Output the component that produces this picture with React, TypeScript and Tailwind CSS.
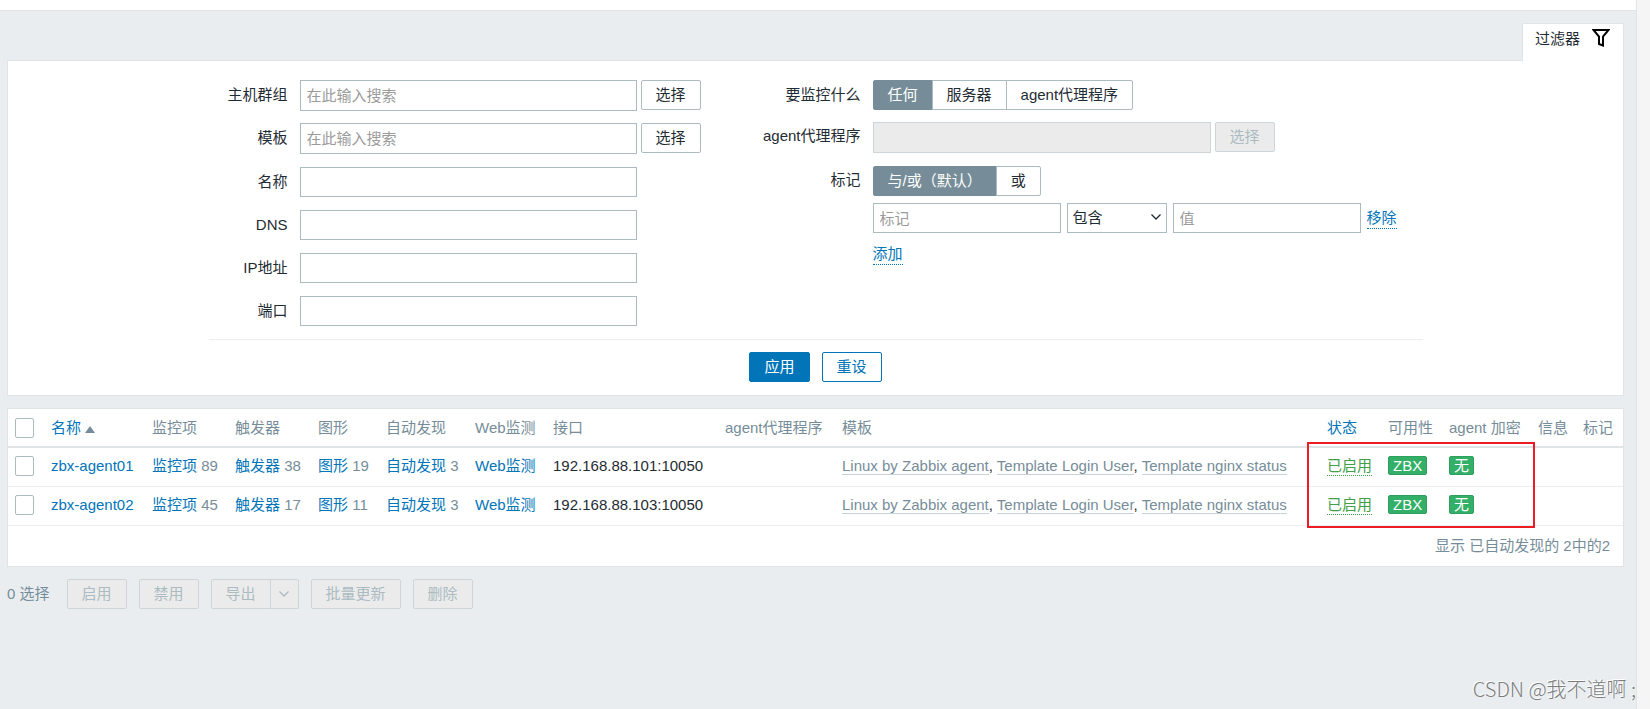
import React from "react";

interface Host {
  name: string;
  items: number;
  triggers: number;
  graphs: number;
  discovery: number;
  iface: string;
  templates: string[];
}

const templates = ["Linux by Zabbix agent", "Template Login User", "Template nginx status"];

const hosts: Host[] = [
  { name: "zbx-agent01", items: 89, triggers: 38, graphs: 19, discovery: 3, iface: "192.168.88.101:10050", templates },
  { name: "zbx-agent02", items: 45, triggers: 17, graphs: 11, discovery: 3, iface: "192.168.88.103:10050", templates },
];

const columns = [
  { label: "监控项", width: "w-[83px]" },
  { label: "触发器", width: "w-[83px]" },
  { label: "图形", width: "w-[68px]" },
  { label: "自动发现", width: "w-[89px]" },
  { label: "Web监测", width: "w-[78px]" },
  { label: "接口", width: "w-[172px]" },
  { label: "agent代理程序", width: "w-[117px]" },
  { label: "模板", width: "" },
  { label: "状态", width: "w-[61px]", link: true },
  { label: "可用性", width: "w-[61px]" },
  { label: "agent 加密", width: "w-[89px]" },
  { label: "信息", width: "w-[45px]" },
  { label: "标记", width: "w-10" },
];

const inputClass = "h-[30px] border border-[#acbbc2] bg-white px-1.5 placeholder:text-[#9b9b9b] outline-none";
const buttonClass = "h-[30px] shrink-0 rounded-xs border border-[#acbbc2] bg-white px-3.5 whitespace-nowrap";
const disabledClass = "h-[30px] shrink-0 rounded-xs border border-[#ccd5d9] bg-[#ebebeb] px-3.5 whitespace-nowrap text-[#acbbc2]";
const checkboxClass = "block h-5 w-[19px] appearance-none rounded-xs border border-[#acbbc2] bg-white";

function Chevron() {
  return (
    <svg width="10" height="6" viewBox="0 0 10 6" fill="none" stroke="currentColor" strokeWidth="1.3">
      <path d="M0.5 0.5L5 5L9.5 0.5" />
    </svg>
  );
}

function Segments({ name, options }: { name: string; options: string[] }) {
  return (
    <div className="flex">
      {options.map((option, idx) => (
        <label
          key={option}
          className="relative -ml-px flex h-[30px] items-center border border-[#acbbc2] bg-white px-3.5 whitespace-nowrap first:ml-0 first:rounded-l-xs last:rounded-r-xs has-checked:border-[#768d99] has-checked:bg-[#768d99] has-checked:text-white"
        >
          <input type="radio" name={name} defaultChecked={idx === 0} className="sr-only" />
          {option}
        </label>
      ))}
    </div>
  );
}

function Filter() {
  return (
    <form className="border border-[#dfe4e7] bg-white pt-[19px] pb-[13px]">
      <div className="mx-auto max-w-[1214px]">
        <div className="flex border-b border-[#ebeef0] pb-[13px]">
          {/* Host fields */}
          <div className="flex flex-col gap-3">
            {["主机群组", "模板"].map((label) => (
              <div key={label} className="flex h-[31px] items-start">
                <label htmlFor={label} className="mr-3 w-[79px] text-right leading-[30px]">
                  {label}
                </label>
                <input
                  id={label}
                  placeholder="在此输入搜索"
                  className="mr-1 h-[31px] w-[337px] border border-[#acbbc2] bg-white px-1.5 outline-none placeholder:text-[#9b9b9b]"
                />
                <button type="button" className={buttonClass}>选择</button>
              </div>
            ))}
            {["名称", "DNS", "IP地址", "端口"].map((label) => (
              <div key={label} className="flex h-[31px] items-end">
                <label htmlFor={label} className="mr-3 w-[79px] text-right leading-[30px]">
                  {label}
                </label>
                <input id={label} className={`${inputClass} w-[337px]`} />
              </div>
            ))}
          </div>

          {/* Monitoring source and tags */}
          <div className="flex flex-1 flex-col gap-3">
            <div className="flex">
              <span className="mr-3 w-40 text-right leading-[30px]">要监控什么</span>
              <Segments name="monitored" options={["任何", "服务器", "agent代理程序"]} />
            </div>
            <div className="flex h-8 items-start">
              <label htmlFor="proxy" className="mr-3 w-40 text-right leading-7">agent代理程序</label>
              <input id="proxy" disabled className="mr-1 h-[31px] w-[338px] border border-[#ccd5d9] bg-[#ebebeb]" />
              <button type="button" disabled className={disabledClass}>选择</button>
            </div>
            <div className="flex">
              <span className="mr-3 w-40 text-right leading-7">标记</span>
              <div>
                <Segments name="evaltype" options={["与/或（默认）", "或"]} />
                <div className="mt-[7px] flex items-center gap-1.5">
                  <input aria-label="标记" placeholder="标记" className={`${inputClass} w-[188px]`} />
                  <div className="relative">
                    <select aria-label="运算符" className="block h-[30px] w-[100px] appearance-none border border-[#acbbc2] bg-white px-[5px]">
                      <option>包含</option>
                    </select>
                    <span className="pointer-events-none absolute top-[11px] right-1.5">
                      <Chevron />
                    </span>
                  </div>
                  <input aria-label="值" placeholder="值" className={`${inputClass} w-[188px]`} />
                  <button type="button" className="border-b border-dotted border-[#0275b8] leading-5 text-[#0275b8]">移除</button>
                </div>
                <button type="button" className="mt-[11px] border-b border-dotted border-[#0275b8] leading-5 text-[#0275b8]">添加</button>
              </div>
            </div>
          </div>
        </div>
        <div className="flex justify-center gap-3 pt-3">
          <button type="button" className="h-[30px] rounded-xs border border-[#0275b8] bg-[#0275b8] px-3.5 text-white">应用</button>
          <button type="button" className="h-[30px] rounded-xs border border-[#0275b8] bg-white px-3.5 text-[#0275b8]">重设</button>
        </div>
      </div>
    </form>
  );
}

function CountLink({ label, count }: { label: string; count: number }) {
  return (
    <td className="pb-0.5 text-[#768d99]">
      <a href="#" className="text-[#0275b8]">{label}</a> {count}
    </td>
  );
}

function HostTable() {
  return (
    <section className="relative mt-3 border border-[#dfe4e7] bg-white">
      <table className="w-full table-fixed border-collapse whitespace-nowrap">
        <thead>
          <tr className="h-[38px] border-b-2 border-[#dfe4e7] text-left text-[#768d99]">
            <th className="w-[43px] pl-[7px]">
              <input type="checkbox" aria-label="全选" className={checkboxClass} />
            </th>
            <th className="w-[101px] font-normal">
              <a href="#" className="flex items-center gap-1 text-[#0275b8]">
                名称
                <svg width="10" height="7" viewBox="0 0 10 7" className="mt-1 fill-[#768d99]">
                  <path d="M5 0L10 7H0Z" />
                </svg>
              </a>
            </th>
            {columns.map((col) => (
              <th key={col.label} className={`${col.width} font-normal`}>
                {col.link ? <a href="#" className="text-[#0275b8]">{col.label}</a> : col.label}
              </th>
            ))}
          </tr>
        </thead>
        <tbody>
          {hosts.map((host) => (
            <tr key={host.name} className="h-[39px] border-b border-[#ebeef0]">
              <td className="pb-0.5 pl-[7px]">
                <input type="checkbox" aria-label={host.name} className={checkboxClass} />
              </td>
              <td className="pb-0.5"><a href="#" className="text-[#0275b8]">{host.name}</a></td>
              <CountLink label="监控项" count={host.items} />
              <CountLink label="触发器" count={host.triggers} />
              <CountLink label="图形" count={host.graphs} />
              <CountLink label="自动发现" count={host.discovery} />
              <td className="pb-0.5"><a href="#" className="text-[#0275b8]">Web监测</a></td>
              <td className="pb-0.5">{host.iface}</td>
              <td></td>
              <td className="pb-0.5">
                {host.templates.map((template, idx) => (
                  <React.Fragment key={template}>
                    {idx > 0 && ", "}
                    <a href="#" className="border-b border-[#c8d1d6] text-[#768d99]">{template}</a>
                  </React.Fragment>
                ))}
              </td>
              <td className="pb-0.5"><a href="#" className="inline-block border-b border-dotted border-[#429e47] leading-[18px] text-[#429e47]">已启用</a></td>
              <td className="pb-0.5">
                <span className="inline-block rounded-xs border border-[#2f9f5e] bg-[#34af67] px-1 leading-[17px] text-white">ZBX</span>
              </td>
              <td className="pb-0.5">
                <span className="inline-block rounded-xs border border-[#2f9f5e] bg-[#34af67] px-1 leading-[17px] text-white">无</span>
              </td>
              <td></td>
              <td></td>
            </tr>
          ))}
        </tbody>
      </table>
      <div className="pr-[13px] text-right leading-10 text-[#768d99]">显示 已自动发现的 2中的2</div>

      {/* Highlight over status, availability and encryption */}
      <div className="pointer-events-none absolute top-[33px] right-[88px] h-[86px] w-[228px] border-2 border-[#ed1c24]"></div>
    </section>
  );
}

export default function App() {
  return (
    <div className="relative flex min-h-screen bg-[#e9edf0] font-['Liberation_Sans','Noto_Sans_CJK_SC',sans-serif] text-[15px] leading-5 text-[#1f2c33]">
      <div className="min-w-0 flex-1">
        <header className="h-[11px] border-b border-[#dfe4e7] bg-white"></header>
        <main className="pt-3 pr-3 pl-[7px]">
          <div className="flex justify-end">
            <button type="button" className="relative -mb-px flex h-[38px] items-start gap-3 rounded-t-xs border border-b-0 border-[#dfe4e7] bg-white pt-[5px] pr-[13px] pl-3">
              过滤器
              <svg width="18" height="18" viewBox="0 0 18 18" fill="none" stroke="#000" strokeWidth="2">
                <path d="M1.5 1H16.5L11 7.5V16.5L7 15V7.5Z" />
              </svg>
            </button>
          </div>
          <Filter />
          <HostTable />
          <div className="mt-3 flex items-center gap-3 text-[#768d99]">
            <span className="mr-[5px]">0 选择</span>
            <button type="button" disabled className={disabledClass}>启用</button>
            <button type="button" disabled className={disabledClass}>禁用</button>
            <div className="flex">
              <button type="button" disabled className={disabledClass}>导出</button>
              <button type="button" disabled aria-label="导出选项" className="-ml-px flex h-[30px] w-[29px] items-center justify-center rounded-r-xs border border-[#ccd5d9] bg-[#ebebeb] text-[#acbbc2]">
                <Chevron />
              </button>
            </div>
            <button type="button" disabled className={disabledClass}>批量更新</button>
            <button type="button" disabled className={disabledClass}>删除</button>
          </div>
        </main>
      </div>
      <div className="w-3.5 shrink-0 border-l border-[#e4e4e4] bg-[#f5f5f5]"></div>
      <p className="absolute right-3.5 bottom-1.5 font-['Noto_Sans_CJK_SC',sans-serif] text-[20px] leading-7 font-light text-[#7d7d7d] [text-shadow:-1px_-1px_0_#fff]">
        CSDN @我不道啊 ;
      </p>
    </div>
  );
}
